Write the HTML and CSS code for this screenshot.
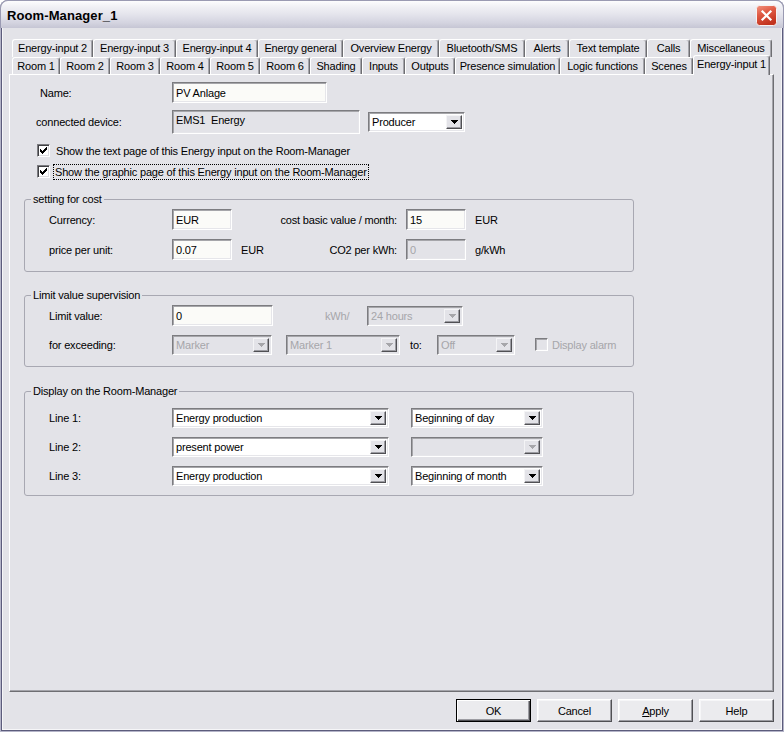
FILE: index.html
```html
<!DOCTYPE html>
<html lang="en">
<head>
<meta charset="utf-8">
<title>Room-Manager_1</title>
<link rel="stylesheet" href="styles.css">
</head>
<body>
<div class="window">
  <header class="titlebar">
    <span class="title">Room-Manager_1</span>
    <span class="close" aria-label="Close">
      <svg width="21" height="21" viewBox="0 0 21 21">
        <defs>
          <linearGradient id="cg" x1="0" y1="0" x2="0.4" y2="1">
            <stop offset="0" stop-color="#f29480"/>
            <stop offset="0.45" stop-color="#e05a44"/>
            <stop offset="1" stop-color="#c2331f"/>
          </linearGradient>
        </defs>
        <rect x="0.5" y="0.5" width="20" height="20" rx="3" fill="url(#cg)" stroke="#f6f2f2"/>
        <path d="M6.5 6.5l8 8M14.5 6.5l-8 8" stroke="#fff" stroke-width="2.2" stroke-linecap="square"/>
      </svg>
    </span>
  </header>

  <div class="client">
    <nav class="tabs">
      <div class="tabrow back">
        <span class="tab">Energy-input 2</span>
        <span class="tab">Energy-input 3</span>
        <span class="tab">Energy-input 4</span>
        <span class="tab">Energy general</span>
        <span class="tab">Overview Energy</span>
        <span class="tab">Bluetooth/SMS</span>
        <span class="tab">Alerts</span>
        <span class="tab">Text template</span>
        <span class="tab">Calls</span>
        <span class="tab">Miscellaneous</span>
      </div>
      <div class="tabrow front">
        <span class="tab">Room 1</span>
        <span class="tab">Room 2</span>
        <span class="tab">Room 3</span>
        <span class="tab">Room 4</span>
        <span class="tab">Room 5</span>
        <span class="tab">Room 6</span>
        <span class="tab">Shading</span>
        <span class="tab">Inputs</span>
        <span class="tab">Outputs</span>
        <span class="tab">Presence simulation</span>
        <span class="tab">Logic functions</span>
        <span class="tab">Scenes</span>
        <span class="tab sel">Energy-input 1</span>
      </div>
    </nav>

    <section class="panel">
      <div class="row r-name">
        <span class="lbl">Name:</span>
        <span class="edit w155">PV Anlage</span>
      </div>
      <div class="row r-dev">
        <span class="lbl">connected device:</span>
        <span class="edit static w188">EMS1&nbsp; Energy</span>
        <span class="combo w97 ml8"><span class="val">Producer</span><span class="drop"><svg width="7" height="4" viewBox="0 0 7 4" shape-rendering="crispEdges"><path d="M0 0h7v1H0zM1 1h5v1H1zM2 2h3v1H2zM3 3h1v1H3z"/></svg></span></span>
      </div>
      <div class="row check-row first">
        <span class="chk"><svg width="7" height="7" viewBox="0 0 7 7" shape-rendering="crispEdges"><path d="M6 0h1v1H6zM5 1h2v1H5zM0 2h1v1H0zM4 2h3v1H4zM0 3h2v1H0zM3 3h3v1H3zM0 4h5v1H0zM1 5h3v1H1zM2 6h1v1H2z"/></svg></span>
        <span class="ctext">Show the text page of this Energy input on the Room-Manager</span>
      </div>
      <div class="row check-row">
        <span class="chk"><svg width="7" height="7" viewBox="0 0 7 7" shape-rendering="crispEdges"><path d="M6 0h1v1H6zM5 1h2v1H5zM0 2h1v1H0zM4 2h3v1H4zM0 3h2v1H0zM3 3h3v1H3zM0 4h5v1H0zM1 5h3v1H1zM2 6h1v1H2z"/></svg></span>
        <span class="ctext focus">Show the graphic page of this Energy input on the Room-Manager</span>
      </div>

      <fieldset class="group g-cost">
        <legend>setting for cost</legend>
        <div class="cost-grid">
          <span>Currency:</span>
          <span class="edit">EUR</span>
          <span></span>
          <span class="rlbl">cost basic value / month:</span>
          <span class="edit">15</span>
          <span class="unit">EUR</span>

          <span>price per unit:</span>
          <span class="edit">0.07</span>
          <span class="unit">EUR</span>
          <span class="rlbl">CO2 per kWh:</span>
          <span class="edit dis">0</span>
          <span class="unit">g/kWh</span>
        </div>
      </fieldset>

      <fieldset class="group g-limit">
        <legend>Limit value supervision</legend>
        <div class="grow">
          <span class="lbl">Limit value:</span>
          <span class="edit w101">0</span>
          <span class="dtext kwh">kWh/</span>
          <span class="combo dis w96"><span class="val">24 hours</span><span class="drop"><svg width="7" height="4" viewBox="0 0 7 4" shape-rendering="crispEdges"><path d="M0 0h7v1H0zM1 1h5v1H1zM2 2h3v1H2zM3 3h1v1H3z"/></svg></span></span>
        </div>
        <div class="grow second">
          <span class="lbl">for exceeding:</span>
          <span class="combo dis w100"><span class="val">Marker</span><span class="drop"><svg width="7" height="4" viewBox="0 0 7 4" shape-rendering="crispEdges"><path d="M0 0h7v1H0zM1 1h5v1H1zM2 2h3v1H2zM3 3h1v1H3z"/></svg></span></span>
          <span class="combo dis w114 ml14"><span class="val">Marker 1</span><span class="drop"><svg width="7" height="4" viewBox="0 0 7 4" shape-rendering="crispEdges"><path d="M0 0h7v1H0zM1 1h5v1H1zM2 2h3v1H2zM3 3h1v1H3z"/></svg></span></span>
          <span class="to">to:</span>
          <span class="combo dis w78"><span class="val">Off</span><span class="drop"><svg width="7" height="4" viewBox="0 0 7 4" shape-rendering="crispEdges"><path d="M0 0h7v1H0zM1 1h5v1H1zM2 2h3v1H2zM3 3h1v1H3z"/></svg></span></span>
          <span class="chk dis ml20"></span>
          <span class="dtext ml5">Display alarm</span>
        </div>
      </fieldset>

      <fieldset class="group g-disp">
        <legend>Display on the Room-Manager</legend>
        <div class="grow">
          <span class="lbl">Line 1:</span>
          <span class="combo w217"><span class="val">Energy production</span><span class="drop"><svg width="7" height="4" viewBox="0 0 7 4" shape-rendering="crispEdges"><path d="M0 0h7v1H0zM1 1h5v1H1zM2 2h3v1H2zM3 3h1v1H3z"/></svg></span></span>
          <span class="combo w132 ml22"><span class="val">Beginning of day</span><span class="drop"><svg width="7" height="4" viewBox="0 0 7 4" shape-rendering="crispEdges"><path d="M0 0h7v1H0zM1 1h5v1H1zM2 2h3v1H2zM3 3h1v1H3z"/></svg></span></span>
        </div>
        <div class="grow">
          <span class="lbl">Line 2:</span>
          <span class="combo w217"><span class="val">present power</span><span class="drop"><svg width="7" height="4" viewBox="0 0 7 4" shape-rendering="crispEdges"><path d="M0 0h7v1H0zM1 1h5v1H1zM2 2h3v1H2zM3 3h1v1H3z"/></svg></span></span>
          <span class="combo dis w132 ml22"><span class="val"></span><span class="drop"><svg width="7" height="4" viewBox="0 0 7 4" shape-rendering="crispEdges"><path d="M0 0h7v1H0zM1 1h5v1H1zM2 2h3v1H2zM3 3h1v1H3z"/></svg></span></span>
        </div>
        <div class="grow">
          <span class="lbl">Line 3:</span>
          <span class="combo w217"><span class="val">Energy production</span><span class="drop"><svg width="7" height="4" viewBox="0 0 7 4" shape-rendering="crispEdges"><path d="M0 0h7v1H0zM1 1h5v1H1zM2 2h3v1H2zM3 3h1v1H3z"/></svg></span></span>
          <span class="combo w132 ml22"><span class="val">Beginning of month</span><span class="drop"><svg width="7" height="4" viewBox="0 0 7 4" shape-rendering="crispEdges"><path d="M0 0h7v1H0zM1 1h5v1H1zM2 2h3v1H2zM3 3h1v1H3z"/></svg></span></span>
        </div>
      </fieldset>
    </section>

    <footer class="buttons">
      <span class="btn default">OK</span>
      <span class="btn">Cancel</span>
      <span class="btn"><u>A</u>pply</span>
      <span class="btn">Help</span>
    </footer>
  </div>
</div>
</body>
</html>
```

FILE: styles.css
```css
* { box-sizing: border-box; }

html, body {
  margin: 0;
  padding: 0;
  background: #ffffff;
}

body {
  font-family: "Liberation Sans", Arial, sans-serif;
  font-size: 11px;
  letter-spacing: -0.18px;
  color: #000;
}

.window {
  width: 784px;
  height: 732px;
  background: #e3e3e8;
  border-radius: 8px 8px 0 0;
  overflow: hidden;
  display: flex;
  flex-direction: column;
  box-shadow: inset 0 0 0 1px #b4b4c8, inset 0 0 0 2px #5c5c7c, inset 0 0 0 3px #f6f6f8;
}

/* ---------- title bar ---------- */
.titlebar {
  flex: none;
  height: 28px;
  display: flex;
  align-items: flex-start;
  justify-content: space-between;
  padding: 0 6px 0 6px;
  border: 1px solid #9a9ab2;
  border-bottom: none;
  border-radius: 8px 8px 0 0;
  background: linear-gradient(#fdfdfe 0%, #f2f2f6 18%, #e4e4ec 50%, #d4d4e0 80%, #c6c6d4 100%);
}

.title {
  font-weight: bold;
  font-size: 13px;
  line-height: 16px;
  margin-top: 7px;
  letter-spacing: 0.1px;
}

.close {
  display: block;
  width: 21px;
  height: 21px;
  margin-top: 4px;
}
.close svg { display: block; }

/* ---------- client ---------- */
.client {
  flex: 1;
  display: flex;
  flex-direction: column;
  padding: 11px 10px 0 9px;
}

.tabs { flex: none; }

.tabrow {
  display: flex;
  padding-left: 3px;
}
.tabrow.back { height: 18px; }
.tabrow.front { height: 17px; }

.tab {
  flex: none;
  display: flex;
  align-items: center;
  justify-content: center;
  height: 100%;
  white-space: nowrap;
  border-top: 1px solid #ffffff;
  border-left: 1px solid #ffffff;
  border-right: 1px solid #6e6e72;
  box-shadow: inset -1px 0 0 #a4a4aa;
  border-radius: 3px 3px 0 0;
  background: #e3e3e8;
  padding-bottom: 1px;
}

.back .tab:nth-child(1) { width: 81px; }
.back .tab:nth-child(2) { width: 83px; }
.back .tab:nth-child(3) { width: 82px; }
.back .tab:nth-child(4) { width: 85px; }
.back .tab:nth-child(5) { width: 96px; }
.back .tab:nth-child(6) { width: 86px; }
.back .tab:nth-child(7) { width: 44px; }
.back .tab:nth-child(8) { width: 78px; }
.back .tab:nth-child(9) { width: 43px; }
.back .tab:nth-child(10) { width: 82px; }

.front .tab:nth-child(1) { width: 48px; }
.front .tab:nth-child(2) { width: 50px; }
.front .tab:nth-child(3) { width: 50px; }
.front .tab:nth-child(4) { width: 50px; }
.front .tab:nth-child(5) { width: 50px; }
.front .tab:nth-child(6) { width: 50px; }
.front .tab:nth-child(7) { width: 52px; }
.front .tab:nth-child(8) { width: 43px; }
.front .tab:nth-child(9) { width: 50px; }
.front .tab:nth-child(10) { width: 105px; }
.front .tab:nth-child(11) { width: 85px; }
.front .tab:nth-child(12) { width: 48px; }

.tab.sel {
  width: 77px;
  height: 20px;
  margin-top: -2px;
  padding-bottom: 3px;
  position: relative;
  z-index: 2;
}

/* ---------- panel ---------- */
.panel {
  flex: none;
  width: 765px;
  height: 618px;
  border: 1px solid;
  border-color: #ffffff #6e6e72 #6e6e72 #ffffff;
  box-shadow: inset -1px -1px 0 #a4a4aa;
  position: relative;
  z-index: 1;
}

.row {
  display: flex;
  align-items: center;
}

.r-name { margin-top: 7px; height: 21px; }
.r-name .lbl { width: 162px; padding-left: 30px; }

.r-dev { margin-top: 7px; height: 24px; }
.r-dev .lbl { width: 162px; padding-left: 26px; }

.check-row { height: 21px; padding-left: 27px; }
.check-row.first { margin-top: 6px; }

.ctext { margin-left: 5px; line-height: 14px; padding: 0 1px; }
.ctext.focus { outline: 1px dotted #000; outline-offset: 0; margin-left: 4px; }

/* ---------- widgets ---------- */
.edit {
  display: flex;
  align-items: center;
  height: 21px;
  padding: 0 3px;
  background: #fbfbf8;
  border: 1px solid;
  border-color: #7c7c80 #ffffff #ffffff #7c7c80;
  box-shadow: inset 1px 1px 0 #a6a6aa, inset -1px -1px 0 #e6e6ea;
  white-space: nowrap;
}
.edit.static {
  height: 24px;
  background: #e3e3e8;
  align-items: flex-start;
  padding-top: 3px;
}
.edit.dis {
  background: #e3e3e8;
  color: #a6a6aa;
}

.combo {
  display: flex;
  align-items: stretch;
  height: 20px;
  padding: 2px;
  background: #ffffff;
  border: 1px solid;
  border-color: #7c7c80 #ffffff #ffffff #7c7c80;
  box-shadow: inset 1px 1px 0 #a6a6aa, inset -1px -1px 0 #e6e6ea;
  flex: none;
}
.combo .val {
  flex: 1;
  display: flex;
  align-items: center;
  padding-left: 1px;
  white-space: nowrap;
  overflow: hidden;
}
.combo .drop {
  flex: none;
  width: 16px;
  display: flex;
  align-items: center;
  justify-content: center;
  background: #e3e3e8;
  border: 1px solid;
  border-color: #f4f4f6 #505054 #505054 #f4f4f6;
  box-shadow: inset -1px -1px 0 #9c9ca2;
}
.combo .drop svg { display: block; fill: #000; }
.combo.dis { background: #e3e3e8; color: #a6a6aa; }
.combo.dis .drop svg { fill: #a6a6aa; }

.chk {
  flex: none;
  width: 13px;
  height: 13px;
  display: flex;
  align-items: center;
  justify-content: center;
  background: #ffffff;
  border: 1px solid;
  border-color: #7c7c80 #ffffff #ffffff #7c7c80;
  box-shadow: inset 1px 1px 0 #404044, inset -1px -1px 0 #dcdce0;
}
.chk svg { display: block; fill: #000; }
.chk.dis {
  background: #e3e3e8;
  box-shadow: inset 1px 1px 0 #a6a6aa, inset -1px -1px 0 #e6e6ea;
}

.dtext { color: #a6a6aa; white-space: nowrap; }

.w78 { width: 78px; }
.w96 { width: 96px; }
.w97 { width: 97px; }
.w100 { width: 100px; }
.w101 { width: 101px; }
.w114 { width: 114px; }
.w132 { width: 132px; }
.w155 { width: 155px; }
.w188 { width: 188px; }
.w217 { width: 217px; }
.ml5 { margin-left: 4px; }
.ml8 { margin-left: 8px; }
.ml14 { margin-left: 14px; }
.ml20 { margin-left: 20px; }
.ml22 { margin-left: 22px; }

/* ---------- group boxes ---------- */
.group {
  width: 610px;
  margin: 0 0 0 14px;
  padding: 0;
  border: 1px solid #a8a8b2;
  border-radius: 3px;
  min-inline-size: 0;
}
.group legend {
  margin-left: 6px;
  padding: 0 2px;
  line-height: 14px;
  font-size: 11px;
}

.g-cost { margin-top: 10px; padding: 3px 0 11px 0; }
.g-limit { margin-top: 16px; padding: 3px 0 11px 0; }
.g-disp { margin-top: 17px; padding: 10px 0 9px 0; }

.cost-grid {
  display: grid;
  grid-template-columns: 123px 60px 34px 140px 60px auto;
  grid-auto-rows: 21px;
  row-gap: 9px;
  align-items: center;
  padding-left: 24px;
}
.cost-grid .unit { padding-left: 9px; }
.cost-grid .rlbl { text-align: right; padding-right: 9px; white-space: nowrap; }

.grow {
  display: flex;
  align-items: center;
  height: 21px;
  padding-left: 24px;
}
.grow .lbl { width: 123px; flex: none; }
.g-limit .grow.second { margin-top: 8px; }
.g-limit .grow .combo { height: 20px; }
.g-disp .grow { height: 20px; }
.g-disp .grow + .grow { margin-top: 9px; }
.g-disp .combo { height: 20px; }

.kwh { width: 42px; margin-left: 52px; }
.to { width: 27px; margin-left: 10px; }

/* ---------- buttons ---------- */
.buttons {
  flex: none;
  display: flex;
  justify-content: flex-end;
  gap: 6px;
  margin-top: 7px;
}
.btn {
  width: 75px;
  height: 23px;
  display: flex;
  align-items: center;
  justify-content: center;
  background: #ebebee;
  border: 1px solid;
  border-color: #ffffff #505054 #505054 #ffffff;
  box-shadow: inset -1px -1px 0 #9c9ca2, inset 1px 1px 0 #f6f6f8;
}
.btn.default {
  border: 1px solid #000;
  box-shadow: inset 1px 1px 0 #ffffff, inset -1px -1px 0 #505054, inset -2px -2px 0 #9c9ca2;
}
.btn u { text-decoration: underline; }
```
